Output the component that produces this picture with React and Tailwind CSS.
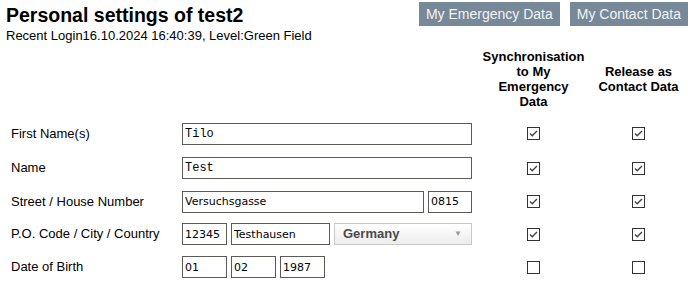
import React from 'react';

const arial = { fontFamily: '"Liberation Sans", Arial, sans-serif' };

// Windows-like checkbox
const Check = ({ checked }) => (
    <svg width="13" height="13" viewBox="0 0 13 13" className="block">
        <rect x="0.5" y="0.5" width="12" height="12" fill="#fff" stroke="#333" />
        {checked && <path d="M3 6.5 L5.2 8.7 L10 3.9" fill="none" stroke="#444" strokeWidth="1.4" />}
    </svg>
);

const Field = ({ value, w, mono }) => (
    <input
        readOnly
        value={value}
        className={`h-[22px] border border-[#5c5c56] bg-white px-[2px] text-black outline-none ${w} ${mono ? 'font-["Liberation_Mono",monospace] text-[12px]' : 'font-["DejaVu_Sans",Verdana,sans-serif] text-[11px]'}`}
    />
);

const Row = ({ label, h, sync, release, children }) => (
    <div className={`flex items-center ${h}`}>
        <div className="w-[182px] pl-[11px] text-[13px] text-black">{label}</div>
        <div className="flex w-[290px] gap-[4px]">{children}</div>
        <div className="flex w-[123px] justify-center"><Check checked={sync} /></div>
        <div className="flex w-[87px] justify-center"><Check checked={release} /></div>
    </div>
);

export default function App() {
    return (
        <div className="h-[292px] w-[699px] overflow-hidden bg-white" style={arial}>
            <div className="flex h-[46px] justify-between">
                <div className="pl-[6px] pt-[4px]">
                    <h1 className="text-[19.5px] font-bold leading-[23px] text-black">Personal settings of test2</h1>
                    <div className="mt-[1px] text-[13px] leading-[15px] text-black">Recent Login16.10.2024 16:40:39, Level:Green Field</div>
                </div>
                <div className="flex gap-[10px] pr-[11px] pt-[2px]">
                    <button className="h-[24px] bg-[#778899] px-[7px] text-[14px] text-[#f4f4f4]">My Emergency Data</button>
                    <button className="h-[24px] bg-[#778899] px-[7px] text-[14px] text-[#f4f4f4]">My Contact Data</button>
                </div>
            </div>

            <div className="flex h-[70px] pt-[3px] text-[13px] font-bold leading-[15px] text-black">
                <div className="w-[472px]" />
                <div className="flex h-[60px] w-[123px] items-center justify-center text-center">
                    Synchronisation<br />to My<br />Emergency<br />Data
                </div>
                <div className="flex h-[60px] w-[87px] items-center justify-center text-center">
                    Release as<br />Contact Data
                </div>
            </div>

            <Row label="First Name(s)" h="h-[35px]" sync release>
                <Field value="Tilo" w="w-[290px]" mono />
            </Row>
            <Row label="Name" h="h-[34px]" sync release>
                <Field value="Test" w="w-[290px]" mono />
            </Row>
            <Row label="Street / House Number" h="h-[33px]" sync release>
                <Field value="Versuchsgasse" w="w-[242px]" />
                <Field value="0815" w="w-[44px]" />
            </Row>
            <Row label="P.O. Code / City / Country" h="h-[32px]" sync release>
                <Field value="12345" w="w-[45px]" />
                <Field value="Testhausen" w="w-[99px]" />
                <div className="flex h-[22px] w-[138px] items-center justify-between border border-[#c8c8c8] bg-gradient-to-b from-white to-[#ececec] pl-[8px] pr-[9px]">
                    <span className="text-[13px] font-bold text-[#4a4a4a]">Germany</span>
                    <span className="text-[8px] text-[#999]">▼</span>
                </div>
            </Row>
            <Row label="Date of Birth" h="h-[34px]">
                <Field value="01" w="w-[45px]" />
                <Field value="02" w="w-[45px]" />
                <Field value="1987" w="w-[45px]" />
            </Row>
        </div>
    );
}
